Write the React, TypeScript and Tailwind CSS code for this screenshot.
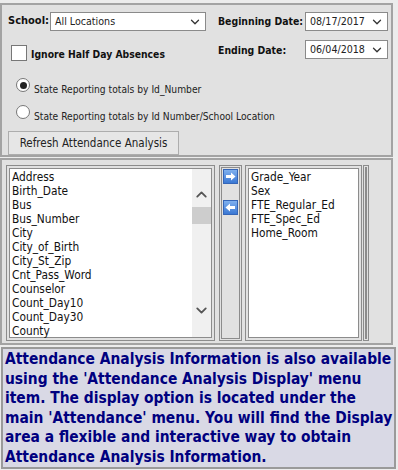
import { ChevronDown, ChevronUp } from "lucide-react";

const FONT = { fontFamily: '"DejaVu Sans Condensed", "DejaVu Sans", sans-serif' };

const leftItems = [
  "Address",
  "Birth_Date",
  "Bus",
  "Bus_Number",
  "City",
  "City_of_Birth",
  "City_St_Zip",
  "Cnt_Pass_Word",
  "Counselor",
  "Count_Day10",
  "Count_Day30",
  "County",
];

const rightItems = ["Grade_Year", "Sex", "FTE_Regular_Ed", "FTE_Spec_Ed", "Home_Room"];

const infoLines = [
  "Attendance Analysis Information is also available",
  "using the 'Attendance Analysis Display' menu",
  "item. The display option is located under the",
  "main 'Attendance' menu. You will find the Display",
  "area a flexible and interactive way to obtain",
  "Attendance Analysis Information.",
];

function Select({ value, className }: { value: string; className: string }) {
  return (
    <div
      className={`h-[19px] flex items-center justify-between border border-[#8a8a8a] bg-white pl-[4px] pr-[3px] text-[10.6px] text-[#222] ${className}`}
    >
      <span>{value}</span>
      <ChevronDown size={14} strokeWidth={2.2} className="text-[#333]" />
    </div>
  );
}

function ArrowBtn({ dir }: { dir: "right" | "left" }) {
  return (
    <div className="w-[15px] h-[15px] bg-gradient-to-b from-[#7fb0ee] to-[#3a78d4] border border-[#3566b8] flex items-center justify-center">
      <svg width="11" height="9" viewBox="0 0 11 9">
        {dir === "right" ? (
          <path d="M1 3h5V0.5L10.5 4.5 6 8.5V6H1z" fill="#fff" />
        ) : (
          <path d="M10 3H5V0.5L0.5 4.5 5 8.5V6h5z" fill="#fff" />
        )}
      </svg>
    </div>
  );
}

export default function App() {
  return (
    <div className="w-[398px] h-[470px] bg-[#ececec] pt-[3px] overflow-hidden" style={FONT}>
      {/* top filter panel */}
      <div className="w-[393px] h-[154px] border-2 border-[#a3a3a3] bg-[#e1e1e1] text-[#111] pl-[6px] pt-[7px]">
        <div className="flex items-center">
          <span className="text-[11px] font-bold w-[42px]">School:</span>
          <Select value="All Locations" className="w-[156px]" />
          <span className="text-[10.4px] font-bold w-[87px] ml-[12px] whitespace-nowrap">Beginning Date:</span>
          <Select value="08/17/2017" className="w-[83px]" />
        </div>
        <div className="flex items-start mt-[9px]">
          <div className="w-[210px] flex items-center mt-[4px] pl-[3px]">
            <div className="w-[16px] h-[16px] border border-[#777] bg-white" />
            <span className="text-[10.3px] font-bold ml-[4px] mt-[3px] whitespace-nowrap">Ignore Half Day Absences</span>
          </div>
          <span className="text-[10.4px] font-bold w-[87px] mt-[3px]">Ending Date:</span>
          <Select value="06/04/2018" className="w-[83px]" />
        </div>
        <div className="flex flex-col pl-[8px] mt-[16px] gap-[13px] text-[10.2px] text-[#222]">
          <div className="flex items-start h-[14px]">
            <div className="w-[14px] h-[14px] rounded-full border border-[#777] bg-white flex items-center justify-center">
              <div className="w-[7px] h-[7px] rounded-full bg-[#222]" />
            </div>
            <span className="ml-[4px] mt-[4px] whitespace-nowrap">State Reporting totals by Id_Number</span>
          </div>
          <div className="flex items-start h-[14px]">
            <div className="w-[14px] h-[14px] rounded-full border border-[#777] bg-white" />
            <span className="ml-[4px] mt-[4px] whitespace-nowrap">State Reporting totals by Id Number/School Location</span>
          </div>
        </div>
        <div className="mt-[12px] w-[171px] h-[24px] border border-[#adadad] bg-[#e6e6e6] flex items-center justify-center text-[11.5px] text-[#222]">
          Refresh Attendance Analysis
        </div>
      </div>

      {/* field picker */}
      <div className="w-[393px] h-[187px] mt-[1px] border-2 border-[#a3a3a3] bg-[#e1e1e1] flex pt-[5px] pl-[4px]">
        <div className="w-[209px] h-[176px] border border-[#8c8c8c] p-[2px]">
          <div className="w-full h-full border border-[#8c8c8c] bg-white flex">
            <div className="flex-1 pl-[2px] pt-[1px] text-[11.8px] leading-[14px] text-[#111]">
              {leftItems.map((it) => (
                <div key={it}>{it}</div>
              ))}
            </div>
            <div className="w-[19px] bg-[#f0f0f0] flex flex-col items-center">
              <ChevronUp size={17} strokeWidth={2.6} className="mt-[17px] text-[#555]" />
              <div className="w-full h-[17px] mt-[4px] bg-[#cdcdcd]" />
              <ChevronDown size={17} strokeWidth={2.6} className="mt-[78px] text-[#555]" />
            </div>
          </div>
        </div>
        <div className="w-[23px] h-[176px] ml-[4px] border border-[#8c8c8c] p-[1px]">
          <div className="w-full h-full border border-[#8c8c8c] flex flex-col items-center pt-[1px] gap-[16px]">
            <ArrowBtn dir="right" />
            <ArrowBtn dir="left" />
          </div>
        </div>
        <div className="w-[117px] h-[176px] ml-[3px] border border-[#8c8c8c] p-[2px]">
          <div className="w-full h-full border border-[#8c8c8c] bg-white pl-[2px] pt-[1px] text-[11.8px] leading-[14px] text-[#111]">
            {rightItems.map((it) => (
              <div key={it}>{it}</div>
            ))}
          </div>
        </div>
        <div className="w-[6px] h-[176px] ml-[1px] border border-[#8c8c8c] p-[1px]">
          <div className="w-full h-full border border-[#8c8c8c]" />
        </div>
      </div>

      {/* info */}
      <div className="w-[395px] h-[122px] mt-[2px] ml-[1px] border-2 border-[#9a9a9a] bg-[#d9d9e5] px-[2px] pt-[1px] text-[15.4px] leading-[19.6px] font-bold text-[#00007f] whitespace-nowrap">
        {infoLines.map((l) => (
          <div key={l}>{l}</div>
        ))}
      </div>
    </div>
  );
}
